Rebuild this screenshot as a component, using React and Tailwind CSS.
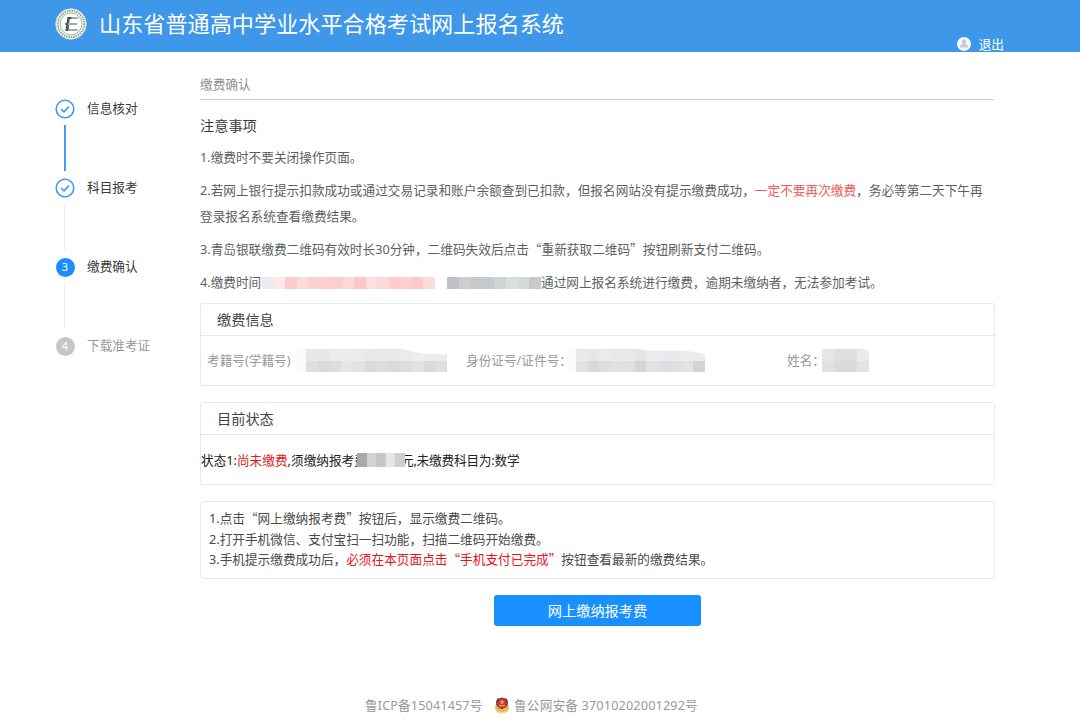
import React from 'react';

const steps = [
    { title: '信息核对', status: 'done' },
    { title: '科目报考', status: 'done' },
    { title: '缴费确认', status: 'active' },
    { title: '下载准考证', status: 'wait' },
];

const payTime = [
    'bg-[#e9edee]', 'bg-[#fde9ea]', 'bg-[#fccacb]', 'bg-[#fddadb]', 'bg-[#fdd0cf]', 'bg-[#fdd0cf]', 'bg-[#fdcdcd]', 'bg-[#fdd8d8]',
    'bg-[#fcc6c9]', 'bg-[#fddfdf]', 'bg-[#fddada]', 'bg-[#fdcccb]', 'bg-[#fdcfce]', 'bg-[#fdc8ca]', 'bg-[#fbdbdc]',
];

const payTimeEnd = [
    'bg-[#bfc1c5]', 'bg-[#cdced0]', 'bg-[#c6c8cb]', 'bg-[#c7cacd]', 'bg-[#cfd3d5]', 'bg-[#dadddf]', 'bg-[#d6d9da]', 'bg-[#c8c9cb]',
];

const studentNo = [
    'bg-[#e7e7e7]', 'bg-[#e7e7e7]', 'bg-[#ebebeb]', 'bg-[#ececed]', 'bg-[#ebebec]', 'bg-[#e8e8e8]',
    'bg-[#eaeaea]', 'bg-[#e9e9e9]', 'bg-[#ececec]', 'bg-[#eeeeee]', 'bg-[#ebebeb]', 'bg-[#ebebeb]',
    'bg-[#dfdfdf]', 'bg-[#dadada]', 'bg-[#dddddd]', 'bg-[#e7e7e8]', 'bg-[#e3e3e4]', 'bg-[#dadada]',
    'bg-[#dddddd]', 'bg-[#dadadb]', 'bg-[#dddddd]', 'bg-[#e3e3e3]', 'bg-[#d9d9d9]', 'bg-[#dfdfdf]',
];

const idNo = [
    'bg-[#e9e9e9]', 'bg-[#e6e6e6]', 'bg-[#ebebeb]', 'bg-[#e9e9e9]', 'bg-[#e9e9e9]', 'bg-[#e4e4e4]',
    'bg-[#ebebeb]', 'bg-[#eaeaec]', 'bg-[#eaeaec]', 'bg-[#ececec]', 'bg-[#ebebeb]',
    'bg-[#e2e2e2]', 'bg-[#d8d8d8]', 'bg-[#dedede]', 'bg-[#e1e1e1]', 'bg-[#e0e0e0]', 'bg-[#d5d5d5]',
    'bg-[#e2e2e2]', 'bg-[#dedee2]', 'bg-[#dfdfe2]', 'bg-[#e3e3e3]', 'bg-[#d3d3d3]',
];

const studentName = [
    'bg-[#e6e6e6]', 'bg-[#dfdfdf]', 'bg-[#dfdfdf]', 'bg-[#eaeaea]',
    'bg-[#e0e0e0]', 'bg-[#dadada]', 'bg-[#dadada]', 'bg-[#e3e3e3]',
];

const fee = ['bg-[#aaa8ab]', 'bg-[#d2d2d4]', 'bg-[#c6c7c9]', 'bg-[#e5e5e5]', 'bg-[#cfcfd0]'];

const Mosaic = ({ cells, className }) => (
    <span className={`grid shrink-0 overflow-hidden ${className}`}>
        {cells.map((color, i) => (
            <span key={i} className={color} />
        ))}
    </span>
);

// full-width quotes need the CJK font
const Q = ({ children }) => <span className="font-['Noto_Sans_CJK_SC',sans-serif]">{children}</span>;

const Logo = () => (
    <svg viewBox="0 0 32 32" className="size-8 shrink-0">
        <circle cx="16" cy="16" r="15.3" fill="#f4f8f3" stroke="#c9dcd9" strokeWidth="0.8" />
        <circle cx="16" cy="16" r="13.2" fill="none" stroke="#8ba48e" strokeWidth="1.8" strokeDasharray="1.5 0.9" />
        <circle cx="16" cy="16" r="11" fill="#fff" stroke="#86a386" strokeWidth="0.8" />
        <path d="M12.500 9H23v2h-8.500v4H22v2h-8v4h8.500v2H10.500z" fill="#aca5ae" />
        <path d="M12.500 9h4v2h-2l-.5 4h-1l-.3 2h1l-.5 6h-2.700l.8-6h-1l.2-2h1.200z" fill="#3f5c41" />
    </svg>
);

const PoliceBadge = () => (
    <svg viewBox="0 0 16 18" className="w-4 h-[17px] shrink-0">
        <path d="M1.800 7.500C0 10 .2 13.500 2.800 15.700c2.700 2.300 7.700 2.300 10.400 0 2.600-2.200 2.800-5.700 1-8.200z" fill="#ecb85c" />
        <path d="M4 14.900c2.500 1.400 5.500 1.400 8 0l-1 1.700c-2 .9-4 .9-6 0z" fill="#f9dd98" />
        <path d="M8 .5l2 .8 2.800.2 1.600 3.200-.5 3.800C12.800 11 10 12.200 8 12.900 6 12.200 3.200 11 2.100 8.500l-.5-3.800 1.600-3.200L6 1.300z" fill="#4d4059" />
        <circle cx="8" cy="6.700" r="5.100" fill="#da322b" />
        <path d="M8 2.800l.8 1.600 1.700.2-1.300 1.200.4 1.700L8 6.700l-1.600.8.4-1.700-1.300-1.200 1.700-.2zM5 8.600h6v1.200H5z" fill="#f5b04c" />
    </svg>
);

const StepIcon = ({ status, number }) => {
    if (status === 'done') {
        return (
            <svg viewBox="0 0 20 20" className="size-5" fill="none" stroke="#3c98f5">
                <circle cx="10" cy="10" r="8.8" strokeWidth="1.6" />
                <path d="M6 10l3 2.900 5-5.400" strokeWidth="1.700" />
            </svg>
        );
    }
    return (
        <span
            className={`flex size-[19px] m-[0.5px] items-center justify-center rounded-full pb-px text-[11px] leading-none text-white ${status === 'active' ? 'bg-[#188ffc]' : 'bg-[#c5c6c8]'}`}
        >
            {number}
        </span>
    );
};

const Card = ({ title, className, children }) => (
    <div className={`w-[795px] rounded-[3px] border border-[#e8e8e8] ${className}`}>
        <div className="h-8 border-b border-[#e8e8e8] pl-4 text-[14.2px] leading-[32px] text-[#444]">{title}</div>
        {children}
    </div>
);

const App = () => {
    return (
        <div className="h-[720px] w-[1080px] overflow-hidden whitespace-nowrap bg-white font-['Noto_Sans','Noto_Sans_CJK_SC',sans-serif] text-[12.66px] text-[#5c5f62]">
            <header className="flex h-[52px] items-start justify-between bg-[#3e97e9] pl-[55px] pr-[76px] text-white">
                <div className="flex items-center pt-2">
                    <Logo />
                    <h1 className="ml-3 pb-px text-[22.15px] leading-[31px]">山东省普通高中学业水平合格考试网上报名系统</h1>
                </div>
                <div className="flex items-center gap-2 pt-[35px] leading-[18px]">
                    <svg viewBox="0 0 14 14" className="size-[14px]">
                        <circle cx="7" cy="7" r="7" fill="#f5f8fb" />
                        <circle cx="7" cy="4.800" r="2.200" fill="#c9c9cc" />
                        <path d="M2.900 10.500c0-2.400 1.400-3.400 4.100-3.400s4.100 1 4.100 3.400z" fill="#c9c9cc" />
                    </svg>
                    <span>退出</span>
                </div>
            </header>

            <div className="flex pl-[55px]">
                <aside className="w-[145px] shrink-0 pt-[47px]">
                    {steps.map((step, i) => (
                        <div key={step.title} className="h-[79px]">
                            <div className={`flex h-5 items-center gap-3 ${step.status === 'wait' ? 'text-[#999]' : 'text-[#3a3a3a]'}`}>
                                <StepIcon status={step.status} number={i + 1} />
                                <span className="pb-[2px]">{step.title}</span>
                            </div>
                            {i < steps.length - 1 && (
                                <div className={`ml-[9px] mt-[6px] h-[46px] ${i === 0 ? 'w-[2px] bg-[#4a9df0]' : 'w-px bg-[#ececec]'}`} />
                            )}
                        </div>
                    ))}
                </aside>

                <main className="w-[795px] shrink-0">
                    <div className="h-[48px] w-[794px] border-b border-[#ccc] pt-[22px] leading-5 text-[#909090]">缴费确认</div>
                    <h2 className="mt-[15px] text-[14.2px] leading-[22px] text-[#3a3a3a]">注意事项</h2>
                    <div className="mt-[7px] flex flex-col gap-[7px] leading-[26px]">
                        <p>1.缴费时不要关闭操作页面。</p>
                        <p>
                            2.若网上银行提示扣款成功或通过交易记录和账户余额查到已扣款，但报名网站没有提示缴费成功，<span className="text-[#f05a5a]">一定不要再次缴费</span>，务必等第二天下午再<br />
                            登录报名系统查看缴费结果。
                        </p>
                        <p>3.青岛银联缴费二维码有效时长30分钟，二维码失效后点击<Q>“</Q>重新获取二维码<Q>”</Q>按钮刷新支付二维码。</p>
                        <div className="flex items-center">
                            <span className="w-[62px]">4.缴费时间</span>
                            <Mosaic cells={payTime} className="mt-px h-3 w-[173px] grid-cols-15" />
                            <Mosaic cells={payTimeEnd} className="mt-px ml-3 h-3 w-[94px] grid-cols-8" />
                            <span>通过网上报名系统进行缴费，逾期未缴纳者，无法参加考试。</span>
                        </div>
                    </div>

                    <Card title="缴费信息" className="mt-2 h-[83px]">
                        <div className="flex h-[49px] items-center pl-[6px] text-[#999]">
                            <span className="w-[88px]">考籍号(学籍号)</span>
                            <span className="h-[23px] w-[11px] rounded-l-lg bg-[#fafafa]" />
                            <Mosaic cells={studentNo} className="h-[23px] w-[141px] grid-cols-12 [clip-path:polygon(0_0,68%_0,83%_20%,100%_24%,100%_100%,0_100%)]" />
                            <span className="ml-[19px] w-[101px]">身份证号/证件号：</span>
                            <span className="h-[23px] w-[9px] rounded-l-lg bg-[#fafafa]" />
                            <Mosaic cells={idNo} className="h-[23px] w-[129px] grid-cols-11 [clip-path:polygon(0_0,48%_0,56%_8%,86%_8%,100%_22%,100%_100%,0_100%)]" />
                            <span className="ml-[82px] w-[35px]">姓名：</span>
                            <Mosaic cells={studentName} className="h-[23px] w-[47px] grid-cols-4 rounded-tr-md" />
                        </div>
                    </Card>

                    <Card title="目前状态" className="mt-4 h-[83px]">
                        <div className="flex h-[50px] items-center text-[#222]">
                            <span>状态1:</span>
                            <span className="text-[#e02020]">尚未缴费</span>
                            <span>,须缴纳报考费</span>
                            <Mosaic cells={fee} className="relative -ml-[10px] h-[14px] w-[48px] grid-cols-5" />
                            <span className="-ml-[4px] tracking-[-0.2px]">元,未缴费科目为:数学</span>
                        </div>
                    </Card>

                    <div className="mt-4 h-[78px] rounded-[3px] border border-[#e8e8e8] pl-2 pt-[6px] leading-[20.5px] text-[#4a4a4a]">
                        <p>1.点击<Q>“</Q>网上缴纳报考费<Q>”</Q>按钮后，显示缴费二维码。</p>
                        <p>2.打开手机微信、支付宝扫一扫功能，扫描二维码开始缴费。</p>
                        <p>
                            3.手机提示缴费成功后，<span className="text-[#e8131b]">必须在本页面点击<Q>“</Q>手机支付已完成<Q>”</Q></span>按钮查看最新的缴费结果。
                        </p>
                    </div>

                    <button className="mx-auto mt-4 block h-[31px] w-[207px] rounded-[3px] bg-[#1890ff] text-[14.2px] leading-[31px] text-white">
                        网上缴纳报考费
                    </button>
                </main>
            </div>

            <footer className="mt-[69px] flex items-center pl-[365px] leading-5 text-[#999]">
                <span className="w-[129px] tracking-[0.12px]">鲁ICP备15041457号</span>
                <PoliceBadge />
                <span className="ml-1 tracking-[0.16px]">鲁公网安备 37010202001292号</span>
            </footer>
        </div>
    );
};

export default App;
